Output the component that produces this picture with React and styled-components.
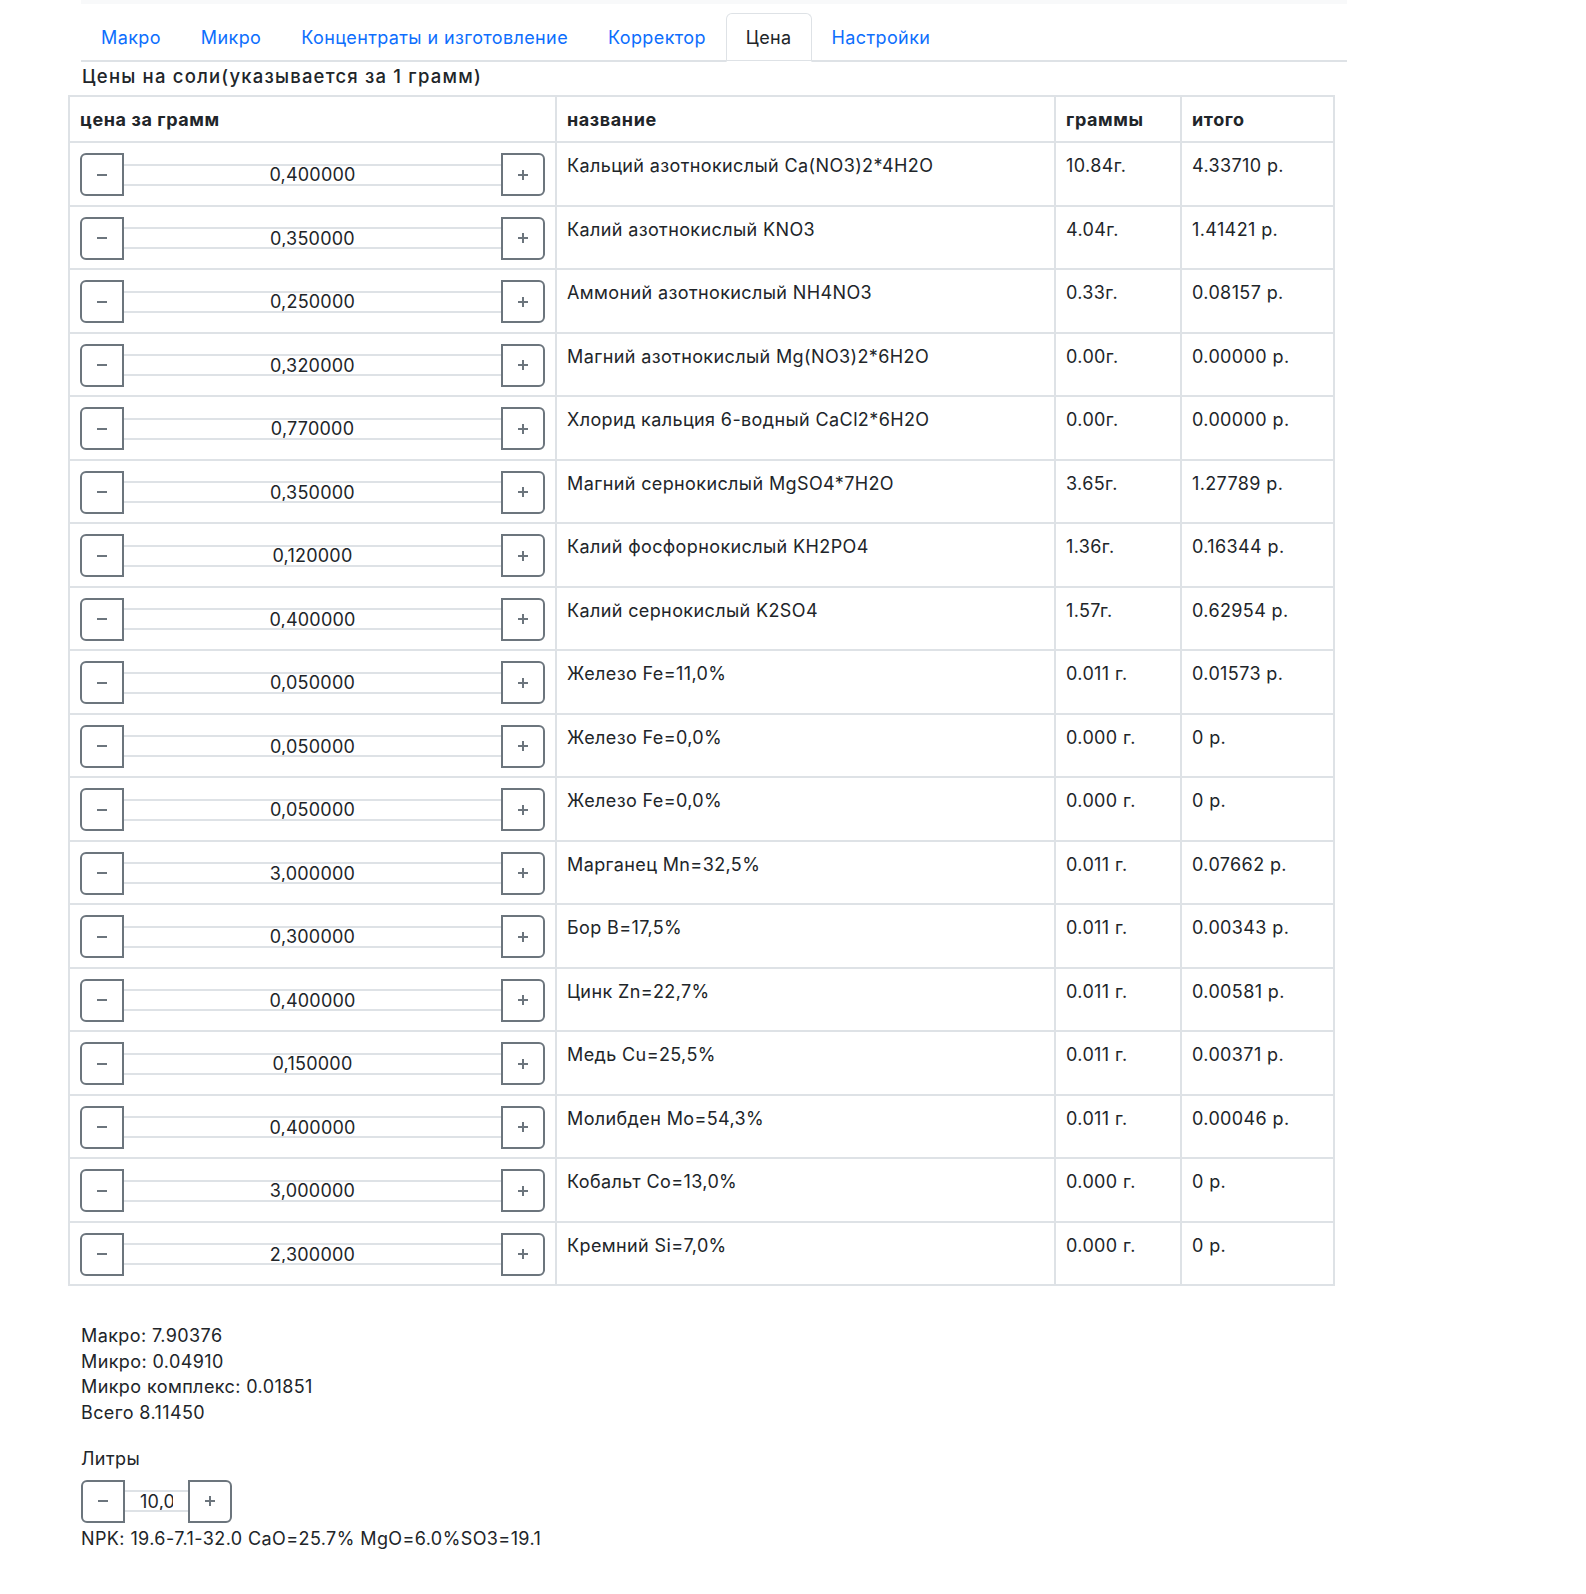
import React from 'react'
import styled, { createGlobalStyle } from 'styled-components'

const GlobalStyle = createGlobalStyle`
    body {
        margin: 0;
        background: #ffffff;
        font-family: Inter, "Noto Sans", "Liberation Sans", sans-serif;
        color: #212529;
    }
`

const Page = styled.div`
    width: 1266px;
    margin-left: 81px;
`

const TopStrip = styled.div`
    height: 4px;
    background: #f8f9fa;
`

const Tabs = styled.ul`
    display: flex;
    list-style: none;
    margin: 9px 0 0;
    padding: 0;
    border-bottom: 2px solid #dee2e6;
`

const Tab = styled.li`
    margin-bottom: -2px;
    padding: 0 19px;
    height: 49px;
    display: flex;
    align-items: center;
    font-size: 18px;
    letter-spacing: 0.38px;
    color: ${p => (p.active ? '#212529' : '#0d6efd')};
    border: 1.5px solid ${p => (p.active ? '#dee2e6' : 'transparent')};
    border-bottom-color: ${p => (p.active ? '#ffffff' : 'transparent')};
    border-radius: 6px 6px 0 0;
    box-sizing: border-box;
    cursor: pointer;
`

const Heading = styled.div`
    font-size: 18.5px;
    font-weight: 500;
    letter-spacing: 1.2px;
    line-height: 26px;
    margin: 1px 0 6px 1px;
`

const Table = styled.table`
    margin-left: -13px;
    width: 1265px;
    table-layout: fixed;
    border-collapse: collapse;
    font-size: 18px;
    letter-spacing: 0.38px;
`

const Th = styled.th`
    border: 2px solid #dee2e6;
    text-align: left;
    font-weight: 700;
    letter-spacing: 0.6px;
    padding: 0 10px;
    height: 46px;
    box-sizing: border-box;
`

const Td = styled.td`
    border: 2px solid #dee2e6;
    vertical-align: top;
    padding: ${p => (p.control ? '10px 10px 8.5px 10px' : '11px 10px 0')};
    line-height: 24px;
`

const Group = styled.div`
    display: flex;
    align-items: center;
    width: ${p => p.width || '100%'};
    height: 43px;
`

const StepButton = styled.button`
    width: 44px;
    height: 43px;
    flex: 0 0 44px;
    box-sizing: border-box;
    background: #ffffff;
    border: 2px solid #6c757d;
    color: #6c757d;
    padding: 0;
    border-radius: ${p => (p.side === 'left' ? '6px 0 0 6px' : '0 6px 6px 0')};
    display: flex;
    align-items: center;
    justify-content: center;
`

const NumberInput = styled.input`
    flex: 1;
    min-width: 0;
    height: 22px;
    box-sizing: border-box;
    border: none;
    border-top: 2px solid #dee2e6;
    border-bottom: 2px solid #dee2e6;
    text-align: ${p => (p.left ? 'left' : 'center')};
    font-family: Inter, "Noto Sans", "Liberation Sans", sans-serif;
    font-size: 18px;
    letter-spacing: 0.22px;
    color: #212529;
    padding: 0 ${p => p.pad || 4}px;
    outline: none;
`

const Summary = styled.div`
    margin-top: 37px;
    font-size: 18px;
    line-height: 25.7px;
    letter-spacing: 0.4px;
`

const Line = styled.div``

const Label = styled.div`
    margin-top: 20px;
    margin-bottom: 8px;
`

const GroupWrap = styled.div`
    margin-bottom: 3px;
`

const MinusIcon = () => (
    <svg width="10" height="10" viewBox="0 0 10 10">
        <line x1="0" y1="5" x2="10" y2="5" stroke="#6c757d" strokeWidth="2" />
    </svg>
)

const PlusIcon = () => (
    <svg width="10" height="10" viewBox="0 0 10 10">
        <line x1="0" y1="5" x2="10" y2="5" stroke="#6c757d" strokeWidth="2" />
        <line x1="5" y1="0" x2="5" y2="10" stroke="#6c757d" strokeWidth="2" />
    </svg>
)

const Stepper = ({ value, width, pad, left }) => (
    <Group width={width}>
        <StepButton side="left"><MinusIcon /></StepButton>
        <NumberInput value={value} readOnly pad={pad} left={left} />
        <StepButton side="right"><PlusIcon /></StepButton>
    </Group>
)

const rows = [
    ['0,400000', 'Кальций азотнокислый Ca(NO3)2*4H2O', '10.84г.', '4.33710 р.'],
    ['0,350000', 'Калий азотнокислый KNO3', '4.04г.', '1.41421 р.'],
    ['0,250000', 'Аммоний азотнокислый NH4NO3', '0.33г.', '0.08157 р.'],
    ['0,320000', 'Магний азотнокислый Mg(NO3)2*6H2O', '0.00г.', '0.00000 р.'],
    ['0,770000', 'Хлорид кальция 6-водный CaCl2*6H2O', '0.00г.', '0.00000 р.'],
    ['0,350000', 'Магний сернокислый MgSO4*7H2O', '3.65г.', '1.27789 р.'],
    ['0,120000', 'Калий фосфорнокислый KH2PO4', '1.36г.', '0.16344 р.'],
    ['0,400000', 'Калий сернокислый K2SO4', '1.57г.', '0.62954 р.'],
    ['0,050000', 'Железо Fe=11,0%', '0.011 г.', '0.01573 р.'],
    ['0,050000', 'Железо Fe=0,0%', '0.000 г.', '0 р.'],
    ['0,050000', 'Железо Fe=0,0%', '0.000 г.', '0 р.'],
    ['3,000000', 'Марганец Mn=32,5%', '0.011 г.', '0.07662 р.'],
    ['0,300000', 'Бор B=17,5%', '0.011 г.', '0.00343 р.'],
    ['0,400000', 'Цинк Zn=22,7%', '0.011 г.', '0.00581 р.'],
    ['0,150000', 'Медь Cu=25,5%', '0.011 г.', '0.00371 р.'],
    ['0,400000', 'Молибден Mo=54,3%', '0.011 г.', '0.00046 р.'],
    ['3,000000', 'Кобальт Co=13,0%', '0.000 г.', '0 р.'],
    ['2,300000', 'Кремний Si=7,0%', '0.000 г.', '0 р.'],
]

const tabs = ['Макро', 'Микро', 'Концентраты и изготовление', 'Корректор', 'Цена', 'Настройки']
const colWidths = [487, 499, 126, 153]

export default function App() {
    return (
        <Page>
            <GlobalStyle />
            <TopStrip />
            <Tabs>
                {tabs.map(t => (
                    <Tab key={t} active={t === 'Цена'}>{t}</Tab>
                ))}
            </Tabs>
            <Heading>Цены на соли(указывается за 1 грамм)</Heading>
            <Table>
                <colgroup>
                    {colWidths.map((w, i) => <col key={i} style={{ width: w }} />)}
                </colgroup>
                <thead>
                    <tr>
                        <Th>цена за грамм</Th>
                        <Th>название</Th>
                        <Th>граммы</Th>
                        <Th>итого</Th>
                    </tr>
                </thead>
                <tbody>
                    {rows.map((r, i) => (
                        <tr key={i}>
                            <Td control><Stepper value={r[0]} /></Td>
                            <Td>{r[1]}</Td>
                            <Td>{r[2]}</Td>
                            <Td>{r[3]}</Td>
                        </tr>
                    ))}
                </tbody>
            </Table>
            <Summary>
                <Line>Макро: 7.90376</Line>
                <Line>Микро: 0.04910</Line>
                <Line>Микро комплекс: 0.01851</Line>
                <Line>Всего 8.11450</Line>
                <Label>Литры</Label>
                <GroupWrap>
                    <Stepper value="10,000000" width="151px" pad={15} left />
                </GroupWrap>
                <Line>NPK: 19.6-7.1-32.0 CaO=25.7% MgO=6.0%SO3=19.1</Line>
            </Summary>
        </Page>
    )
}
